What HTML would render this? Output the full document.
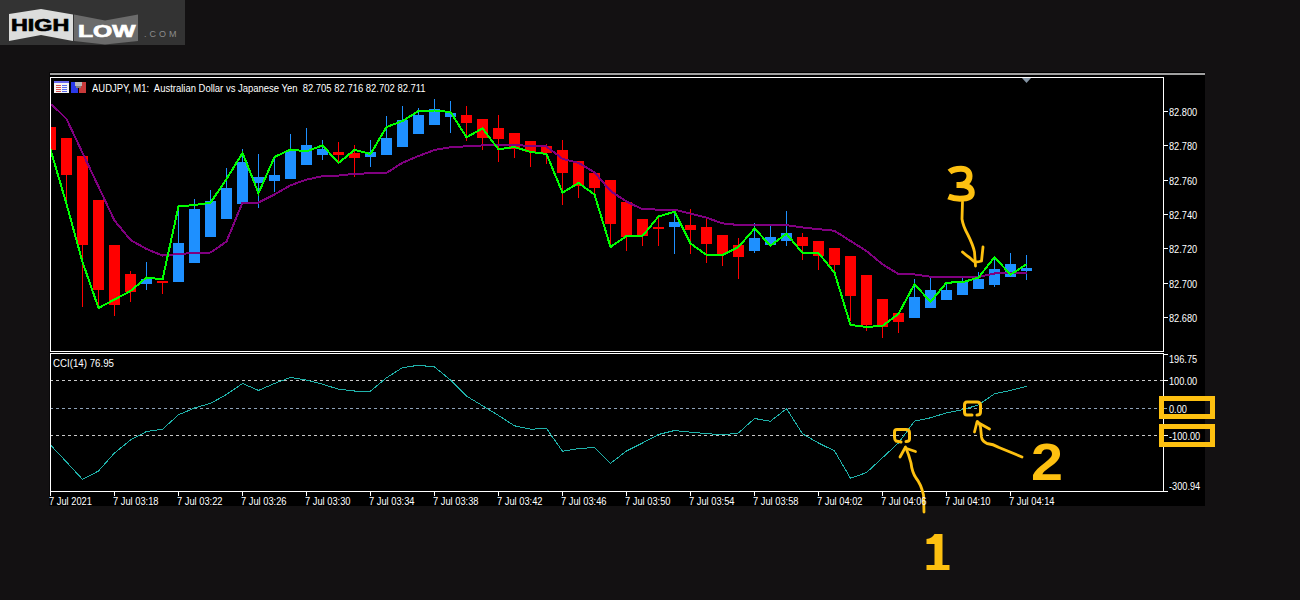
<!DOCTYPE html>
<html><head><meta charset="utf-8">
<style>
html,body{margin:0;padding:0;}
body{width:1300px;height:600px;background:#131112;position:relative;overflow:hidden;font-family:"Liberation Sans",sans-serif;}
.t{position:absolute;color:#fff;font-size:10px;line-height:10px;white-space:pre;transform-origin:0 0;}
svg{position:absolute;left:0;top:0;}
</style></head><body>
<svg width="1300" height="600" viewBox="0 0 1300 600">
<rect x="0" y="0" width="185" height="45" fill="#333333"/>
<polygon points="9,14 41,9 73,14.5 73,41 41,35 9,41" fill="#dcdddc"/>
<polygon points="74,14.5 105,20.5 138,14.5 138,41 105,44.6 74,41" fill="#6b6b6b"/>
<rect x="49.5" y="72" width="1155.5" height="434" fill="#000"/>
<rect x="50" y="73" width="1155" height="2" fill="#a0a0a0"/>
<polygon points="1022,78 1031,78 1026.5,83" fill="#8393a3"/>
<g shape-rendering="crispEdges">
<rect x="50" y="127" width="1" height="23" fill="#ff0000"/>
<rect x="51" y="127" width="5" height="23" fill="#ff0000"/>
<rect x="66" y="138" width="1" height="66" fill="#ff0000"/>
<rect x="61" y="138" width="11" height="37" fill="#ff0000"/>
<rect x="82" y="156" width="1" height="151" fill="#ff0000"/>
<rect x="77" y="156" width="11" height="89" fill="#ff0000"/>
<rect x="98" y="200" width="1" height="109" fill="#ff0000"/>
<rect x="93" y="200" width="11" height="90" fill="#ff0000"/>
<rect x="114" y="245" width="1" height="71" fill="#ff0000"/>
<rect x="109" y="245" width="11" height="60" fill="#ff0000"/>
<rect x="130" y="271" width="1" height="31" fill="#ff0000"/>
<rect x="125" y="274" width="11" height="18" fill="#ff0000"/>
<rect x="146" y="262" width="1" height="28" fill="#1e90ff"/>
<rect x="141" y="279" width="11" height="5" fill="#1e90ff"/>
<rect x="162" y="281" width="1" height="13" fill="#ff0000"/>
<rect x="157" y="281" width="11" height="2" fill="#ff0000"/>
<rect x="178" y="207" width="1" height="75" fill="#1e90ff"/>
<rect x="173" y="243" width="11" height="39" fill="#1e90ff"/>
<rect x="194" y="199" width="1" height="64" fill="#1e90ff"/>
<rect x="189" y="209" width="11" height="54" fill="#1e90ff"/>
<rect x="210" y="190" width="1" height="47" fill="#1e90ff"/>
<rect x="205" y="201" width="11" height="36" fill="#1e90ff"/>
<rect x="226" y="168" width="1" height="51" fill="#1e90ff"/>
<rect x="221" y="188" width="11" height="31" fill="#1e90ff"/>
<rect x="242" y="149" width="1" height="55" fill="#1e90ff"/>
<rect x="237" y="162" width="11" height="42" fill="#1e90ff"/>
<rect x="258" y="154" width="1" height="54" fill="#1e90ff"/>
<rect x="253" y="177" width="11" height="6" fill="#1e90ff"/>
<rect x="274" y="158" width="1" height="34" fill="#1e90ff"/>
<rect x="269" y="175" width="11" height="6" fill="#1e90ff"/>
<rect x="290" y="134" width="1" height="45" fill="#1e90ff"/>
<rect x="285" y="151" width="11" height="28" fill="#1e90ff"/>
<rect x="306" y="128" width="1" height="37" fill="#1e90ff"/>
<rect x="301" y="145" width="11" height="20" fill="#1e90ff"/>
<rect x="322" y="140" width="1" height="20" fill="#1e90ff"/>
<rect x="317" y="149" width="11" height="6" fill="#1e90ff"/>
<rect x="338" y="142" width="1" height="20" fill="#ff0000"/>
<rect x="333" y="152" width="11" height="3" fill="#ff0000"/>
<rect x="354" y="145" width="1" height="32" fill="#ff0000"/>
<rect x="349" y="153" width="11" height="5" fill="#ff0000"/>
<rect x="370" y="140" width="1" height="27" fill="#1e90ff"/>
<rect x="365" y="152" width="11" height="5" fill="#1e90ff"/>
<rect x="386" y="116" width="1" height="39" fill="#1e90ff"/>
<rect x="381" y="138" width="11" height="17" fill="#1e90ff"/>
<rect x="402" y="106" width="1" height="41" fill="#1e90ff"/>
<rect x="397" y="120" width="11" height="27" fill="#1e90ff"/>
<rect x="418" y="108" width="1" height="26" fill="#1e90ff"/>
<rect x="413" y="115" width="11" height="19" fill="#1e90ff"/>
<rect x="434" y="99" width="1" height="26" fill="#1e90ff"/>
<rect x="429" y="109" width="11" height="16" fill="#1e90ff"/>
<rect x="450" y="101" width="1" height="32" fill="#1e90ff"/>
<rect x="445" y="113" width="11" height="4" fill="#1e90ff"/>
<rect x="466" y="106" width="1" height="35" fill="#ff0000"/>
<rect x="461" y="115" width="11" height="8" fill="#ff0000"/>
<rect x="482" y="119" width="1" height="31" fill="#ff0000"/>
<rect x="477" y="119" width="11" height="19" fill="#ff0000"/>
<rect x="498" y="115" width="1" height="47" fill="#ff0000"/>
<rect x="493" y="128" width="11" height="11" fill="#ff0000"/>
<rect x="514" y="133" width="1" height="25" fill="#ff0000"/>
<rect x="509" y="133" width="11" height="16" fill="#ff0000"/>
<rect x="530" y="141" width="1" height="26" fill="#ff0000"/>
<rect x="525" y="141" width="11" height="11" fill="#ff0000"/>
<rect x="546" y="144" width="1" height="20" fill="#ff0000"/>
<rect x="541" y="146" width="11" height="7" fill="#ff0000"/>
<rect x="562" y="140" width="1" height="65" fill="#ff0000"/>
<rect x="557" y="150" width="11" height="23" fill="#ff0000"/>
<rect x="578" y="161" width="1" height="37" fill="#ff0000"/>
<rect x="573" y="161" width="11" height="25" fill="#ff0000"/>
<rect x="594" y="173" width="1" height="21" fill="#ff0000"/>
<rect x="589" y="173" width="11" height="15" fill="#ff0000"/>
<rect x="610" y="180" width="1" height="67" fill="#ff0000"/>
<rect x="605" y="180" width="11" height="44" fill="#ff0000"/>
<rect x="626" y="202" width="1" height="49" fill="#ff0000"/>
<rect x="621" y="202" width="11" height="35" fill="#ff0000"/>
<rect x="642" y="219" width="1" height="27" fill="#ff0000"/>
<rect x="637" y="219" width="11" height="17" fill="#ff0000"/>
<rect x="658" y="218" width="1" height="28" fill="#ff0000"/>
<rect x="653" y="227" width="11" height="2" fill="#ff0000"/>
<rect x="674" y="210" width="1" height="44" fill="#1e90ff"/>
<rect x="669" y="222" width="11" height="5" fill="#1e90ff"/>
<rect x="690" y="209" width="1" height="45" fill="#ff0000"/>
<rect x="685" y="225" width="11" height="5" fill="#ff0000"/>
<rect x="706" y="219" width="1" height="44" fill="#ff0000"/>
<rect x="701" y="227" width="11" height="17" fill="#ff0000"/>
<rect x="722" y="235" width="1" height="31" fill="#ff0000"/>
<rect x="717" y="235" width="11" height="19" fill="#ff0000"/>
<rect x="738" y="238" width="1" height="41" fill="#ff0000"/>
<rect x="733" y="245" width="11" height="12" fill="#ff0000"/>
<rect x="754" y="223" width="1" height="30" fill="#1e90ff"/>
<rect x="749" y="238" width="11" height="13" fill="#1e90ff"/>
<rect x="770" y="226" width="1" height="21" fill="#1e90ff"/>
<rect x="765" y="237" width="11" height="8" fill="#1e90ff"/>
<rect x="786" y="211" width="1" height="35" fill="#1e90ff"/>
<rect x="781" y="233" width="11" height="8" fill="#1e90ff"/>
<rect x="802" y="233" width="1" height="27" fill="#ff0000"/>
<rect x="797" y="237" width="11" height="9" fill="#ff0000"/>
<rect x="818" y="241" width="1" height="29" fill="#ff0000"/>
<rect x="813" y="241" width="11" height="15" fill="#ff0000"/>
<rect x="834" y="248" width="1" height="25" fill="#ff0000"/>
<rect x="829" y="248" width="11" height="17" fill="#ff0000"/>
<rect x="850" y="256" width="1" height="65" fill="#ff0000"/>
<rect x="845" y="256" width="11" height="40" fill="#ff0000"/>
<rect x="866" y="275" width="1" height="56" fill="#ff0000"/>
<rect x="861" y="275" width="11" height="50" fill="#ff0000"/>
<rect x="882" y="299" width="1" height="39" fill="#ff0000"/>
<rect x="877" y="299" width="11" height="28" fill="#ff0000"/>
<rect x="898" y="313" width="1" height="20" fill="#ff0000"/>
<rect x="893" y="313" width="11" height="9" fill="#ff0000"/>
<rect x="914" y="279" width="1" height="39" fill="#1e90ff"/>
<rect x="909" y="297" width="11" height="21" fill="#1e90ff"/>
<rect x="930" y="278" width="1" height="30" fill="#1e90ff"/>
<rect x="925" y="290" width="11" height="18" fill="#1e90ff"/>
<rect x="946" y="283" width="1" height="17" fill="#1e90ff"/>
<rect x="941" y="290" width="11" height="10" fill="#1e90ff"/>
<rect x="962" y="278" width="1" height="17" fill="#1e90ff"/>
<rect x="957" y="282" width="11" height="13" fill="#1e90ff"/>
<rect x="978" y="272" width="1" height="17" fill="#1e90ff"/>
<rect x="973" y="279" width="11" height="10" fill="#1e90ff"/>
<rect x="994" y="258" width="1" height="29" fill="#1e90ff"/>
<rect x="989" y="269" width="11" height="16" fill="#1e90ff"/>
<rect x="1010" y="253" width="1" height="24" fill="#1e90ff"/>
<rect x="1005" y="264" width="11" height="13" fill="#1e90ff"/>
<rect x="1026" y="255" width="1" height="25" fill="#1e90ff"/>
<rect x="1021" y="268" width="11" height="3" fill="#1e90ff"/>
</g>
<polyline points="50.5,104 58.5,111 66.5,119 114.5,220.5 130.5,240 146.5,249 162.5,255.5 178.5,254 194.5,253 210.5,252.5 226.5,241.6 242.5,202.5 258.5,202.5 274.5,194.5 290.5,185.3 306.5,179.6 322.5,176.2 338.5,175.6 354.5,173.8 370.5,173.3 386.5,172.9 402.5,162.8 418.5,156 434.5,150 450.5,147.2 466.5,146.3 482.5,145.4 498.5,144.8 514.5,145 530.5,146 546.5,146.5 562.5,158.8 578.5,162.8 594.5,172.3 610.5,191 626.5,201.6 642.5,209.2 658.5,209.6 674.5,209.6 690.5,213.6 706.5,217.7 722.5,223.4 738.5,225 754.5,225 770.5,225 786.5,225.1 802.5,227.4 818.5,229.2 834.5,230.8 850.5,241 866.5,251 882.5,264.3 898.5,274 914.5,274.4 930.5,276.7 946.5,276.7 962.5,276.9 978.5,277 994.5,273.5 1010.5,272.8 1026.5,272.8" fill="none" stroke="#800080" stroke-width="2" shape-rendering="crispEdges"/>
<polyline points="50.5,149.5 66.5,204 82.5,262 98.5,308 130.5,291 146.5,277.5 162.5,279.5 178.5,206.5 194.5,205 210.5,202.7 226.5,179 242.5,153 258.5,193.3 274.5,157 290.5,149.5 306.5,151.5 322.5,145.3 338.5,163 354.5,149.8 370.5,154 386.5,127 402.5,121 418.5,111 434.5,110.5 450.5,112 466.5,137.3 482.5,128.4 498.5,149.4 514.5,147 530.5,152 546.5,154 562.5,192.6 578.5,183 594.5,194.5 610.5,247 626.5,236 642.5,236 658.5,216.5 674.5,211.7 690.5,243.5 706.5,254.9 722.5,254.9 738.5,246.9 754.5,228.6 770.5,245.5 786.5,233.8 802.5,253 818.5,253 834.5,272.6 850.5,325 866.5,326.9 882.5,326 898.5,313.9 914.5,284.2 930.5,301.8 946.5,282.6 962.5,282.3 978.5,277.5 994.5,257.2 1010.5,274.6 1026.5,264.2" fill="none" stroke="#00ff00" stroke-width="2" shape-rendering="crispEdges"/>
<g stroke-dasharray="3,3" stroke-width="1">
<line x1="50" y1="380.5" x2="1163" y2="380.5" stroke="#c8c8c8"/>
<line x1="50" y1="408.5" x2="1163" y2="408.5" stroke="#8ea2b8"/>
<line x1="50" y1="435.5" x2="1163" y2="435.5" stroke="#c8c8c8"/>
</g>
<polyline points="50.5,445 66.5,462 82.5,479.4 98.5,471 114.5,453 130.5,440 146.5,431.5 162.5,429.2 178.5,414.8 194.5,408 210.5,403.4 226.5,394.5 242.5,383.5 258.5,390.4 274.5,383.5 290.5,377.4 306.5,380.1 322.5,384.2 338.5,389.2 354.5,391 370.5,391 386.5,377.8 402.5,367.6 418.5,365.3 434.5,366.9 450.5,380 466.5,396.1 482.5,405.7 498.5,415.5 514.5,425.8 530.5,429.2 546.5,428.5 562.5,451.3 578.5,448.6 594.5,447.5 610.5,463.4 626.5,451 642.5,443 658.5,434.5 674.5,430.5 690.5,432.2 706.5,433.5 722.5,434.9 738.5,433 754.5,418.5 770.5,421.2 786.5,408.7 802.5,433.8 818.5,443 834.5,450.9 850.5,478.3 866.5,472.6 882.5,457.7 898.5,442.9 914.5,421.2 930.5,417.8 946.5,412.8 962.5,409.8 978.5,404.8 994.5,393.8 1010.5,390.4 1026.5,386.3" fill="none" stroke="#20b2aa" stroke-width="1" shape-rendering="crispEdges"/>
<g fill="none" stroke="#fff" stroke-width="1">
<rect x="50.5" y="77.5" width="1113" height="274"/>
<rect x="50.5" y="353.5" width="1113" height="138"/>
</g>
<rect x="1164" y="111" width="4" height="1" fill="#fff"/>
<rect x="1164" y="145" width="4" height="1" fill="#fff"/>
<rect x="1164" y="180" width="4" height="1" fill="#fff"/>
<rect x="1164" y="214" width="4" height="1" fill="#fff"/>
<rect x="1164" y="248" width="4" height="1" fill="#fff"/>
<rect x="1164" y="283" width="4" height="1" fill="#fff"/>
<rect x="1164" y="317" width="4" height="1" fill="#fff"/>
<rect x="1164" y="354" width="4" height="1" fill="#fff"/>
<rect x="1164" y="380" width="4" height="1" fill="#fff"/>
<rect x="1164" y="435" width="4" height="1" fill="#fff"/>
<rect x="1164" y="491" width="4" height="1" fill="#fff"/>
<rect x="1164" y="408" width="3" height="1" fill="#8ea2b8"/>
<rect x="50" y="492" width="1" height="4" fill="#fff"/>
<rect x="114" y="492" width="1" height="4" fill="#fff"/>
<rect x="178" y="492" width="1" height="4" fill="#fff"/>
<rect x="242" y="492" width="1" height="4" fill="#fff"/>
<rect x="306" y="492" width="1" height="4" fill="#fff"/>
<rect x="370" y="492" width="1" height="4" fill="#fff"/>
<rect x="434" y="492" width="1" height="4" fill="#fff"/>
<rect x="498" y="492" width="1" height="4" fill="#fff"/>
<rect x="562" y="492" width="1" height="4" fill="#fff"/>
<rect x="626" y="492" width="1" height="4" fill="#fff"/>
<rect x="690" y="492" width="1" height="4" fill="#fff"/>
<rect x="754" y="492" width="1" height="4" fill="#fff"/>
<rect x="818" y="492" width="1" height="4" fill="#fff"/>
<rect x="882" y="492" width="1" height="4" fill="#fff"/>
<rect x="946" y="492" width="1" height="4" fill="#fff"/>
<rect x="1010" y="492" width="1" height="4" fill="#fff"/>
<rect x="54" y="81" width="15" height="12" fill="#f4f4f4"/>
<rect x="54" y="81" width="15" height="2" fill="#6a6af0"/>
<rect x="56" y="85" width="5" height="1" fill="#d85050"/>
<rect x="62" y="85" width="5" height="1" fill="#5a6af0"/>
<rect x="56" y="87" width="5" height="1" fill="#d85050"/>
<rect x="62" y="87" width="5" height="1" fill="#5a6af0"/>
<rect x="56" y="89" width="5" height="1" fill="#d85050"/>
<rect x="62" y="89" width="5" height="1" fill="#5a6af0"/>
<rect x="56" y="91" width="5" height="1" fill="#d85050"/>
<rect x="62" y="91" width="5" height="1" fill="#5a6af0"/>
<rect x="71" y="82" width="7" height="11" fill="#2a3ae8"/>
<rect x="79" y="82" width="7" height="11" fill="#c83a3a"/>
<rect x="75" y="82" width="7" height="4" fill="#b8b8b8"/>
<rect x="76" y="86" width="5" height="2" fill="#808080"/>
<g fill="none" stroke="#fdc010" stroke-width="5">
<rect x="1161.5" y="398.5" width="51" height="18"/>
<rect x="1161.5" y="426.5" width="51" height="18"/>
</g>
<g fill="none" stroke="#fdc010" stroke-width="3" stroke-linecap="round" stroke-linejoin="round">
<path d="M901,442 L896,441 Q894.5,440 894.5,437 L894.5,432 Q894.5,429.5 897,429.5 L906,429.5 Q909.5,429.5 909.5,433 L909.5,439 Q909.5,441.5 906,441.5"/>
<path d="M972,415 L967,415 Q964.5,415 964.5,412 L964.5,405 Q964.5,402 967,402 L977,402 Q980.5,402 980.5,405 L980.5,412 Q980.5,415 977,415"/>
</g>
<g fill="none" stroke="#fdc010" stroke-width="2.8" stroke-linecap="round" stroke-linejoin="round">
<path d="M924,512 L923.5,495 Q921,484 916,478 Q912,472 911,463 Q909,455 905.5,447"/>
<path d="M900,457 L905,448 L915.5,451.5"/>
<path d="M1022,457 L999,447.5 Q993,444 987,443.5 Q982,441 981.5,437 L980.5,427 Q979.5,423.5 977.5,421.5"/>
<path d="M974.5,432 L977,422 L989.5,429"/>
<path d="M962.5,202 L962,219 Q963,226 968,235 Q973,245 974.5,252 L975.5,266"/>
<path d="M962.5,252 Q967,256 969.5,257.5 Q973,261 975,262 Q979,262 981.5,261 L983,247"/>
</g>
<path d="M934.5,534 L942.5,534 L942.5,565 L949.5,565 L949.5,570 L926.5,570 L926.5,565 L934.5,565 L934.5,544 L926.5,544 L926.5,539 Q932,538.5 934.5,534 Z" fill="#fdc010"/>
<path d="M949.5,172 C952.5,169.5 957,168.75 961,168.75 C967,168.75 969.5,172 969.5,176 C969.5,181.5 965,185 960,185 L956.5,185 M960,185 C968,185 971.75,188.5 971.75,192.5 C971.75,197 967,198.75 960,198.75 C955.5,198.75 952,198 948.5,196.5" fill="none" stroke="#fdc010" stroke-width="6"/>
</svg>
<div class="t" style="left:92px;top:84px;transform:scaleX(0.946);;color:#fff">AUDJPY, M1:  Australian Dollar vs Japanese Yen  82.705 82.716 82.702 82.711</div>
<div class="t" style="left:1168.5px;top:108px;transform:scaleX(0.92);;color:#fff">82.800</div>
<div class="t" style="left:1168.5px;top:142px;transform:scaleX(0.92);;color:#fff">82.780</div>
<div class="t" style="left:1168.5px;top:177px;transform:scaleX(0.92);;color:#fff">82.760</div>
<div class="t" style="left:1168.5px;top:211px;transform:scaleX(0.92);;color:#fff">82.740</div>
<div class="t" style="left:1168.5px;top:245px;transform:scaleX(0.92);;color:#fff">82.720</div>
<div class="t" style="left:1168.5px;top:280px;transform:scaleX(0.92);;color:#fff">82.700</div>
<div class="t" style="left:1168.5px;top:314px;transform:scaleX(0.92);;color:#fff">82.680</div>
<div class="t" style="left:53px;top:359px;transform:scaleX(0.97);;color:#fff">CCI(14) 76.95</div>
<div class="t" style="left:1168.5px;top:355px;transform:scaleX(0.92);;color:#fff">196.75</div>
<div class="t" style="left:1168.5px;top:377px;transform:scaleX(0.92);;color:#fff">100.00</div>
<div class="t" style="left:1168.5px;top:405px;transform:scaleX(0.92);;color:#fff">0.00</div>
<div class="t" style="left:1168.5px;top:432px;transform:scaleX(0.92);;color:#fff">-100.00</div>
<div class="t" style="left:1168.5px;top:482px;transform:scaleX(0.92);;color:#fff">-300.94</div>
<div class="t" style="left:49px;top:497px;transform:scaleX(0.93);;color:#fff">7 Jul 2021</div>
<div class="t" style="left:113px;top:497px;transform:scaleX(0.93);;color:#fff">7 Jul 03:18</div>
<div class="t" style="left:177px;top:497px;transform:scaleX(0.93);;color:#fff">7 Jul 03:22</div>
<div class="t" style="left:241px;top:497px;transform:scaleX(0.93);;color:#fff">7 Jul 03:26</div>
<div class="t" style="left:305px;top:497px;transform:scaleX(0.93);;color:#fff">7 Jul 03:30</div>
<div class="t" style="left:369px;top:497px;transform:scaleX(0.93);;color:#fff">7 Jul 03:34</div>
<div class="t" style="left:433px;top:497px;transform:scaleX(0.93);;color:#fff">7 Jul 03:38</div>
<div class="t" style="left:497px;top:497px;transform:scaleX(0.93);;color:#fff">7 Jul 03:42</div>
<div class="t" style="left:561px;top:497px;transform:scaleX(0.93);;color:#fff">7 Jul 03:46</div>
<div class="t" style="left:625px;top:497px;transform:scaleX(0.93);;color:#fff">7 Jul 03:50</div>
<div class="t" style="left:689px;top:497px;transform:scaleX(0.93);;color:#fff">7 Jul 03:54</div>
<div class="t" style="left:753px;top:497px;transform:scaleX(0.93);;color:#fff">7 Jul 03:58</div>
<div class="t" style="left:817px;top:497px;transform:scaleX(0.93);;color:#fff">7 Jul 04:02</div>
<div class="t" style="left:881px;top:497px;transform:scaleX(0.93);;color:#fff">7 Jul 04:06</div>
<div class="t" style="left:945px;top:497px;transform:scaleX(0.93);;color:#fff">7 Jul 04:10</div>
<div class="t" style="left:1009px;top:497px;transform:scaleX(0.93);;color:#fff">7 Jul 04:14</div>
<div style="position:absolute;left:11px;top:17px;font-weight:bold;font-size:17px;line-height:17px;color:#000;-webkit-text-stroke:0.7px #000;transform:scaleX(1.37);transform-origin:0 0">HIGH</div>
<div style="position:absolute;left:77.5px;top:23px;font-weight:bold;font-size:17px;line-height:17px;color:#fff;-webkit-text-stroke:0.7px #fff;transform:scaleX(1.45);transform-origin:0 0">LOW</div>
<div style="position:absolute;left:144px;top:30px;font-size:9px;line-height:9px;color:#8c8c8c;letter-spacing:3px">.COM</div>
<div style="position:absolute;left:1031px;top:437px;font-weight:bold;font-size:50px;line-height:50px;color:#fdc010;transform:scale(1.15,1.03);transform-origin:0 0">2</div>
</body></html>
